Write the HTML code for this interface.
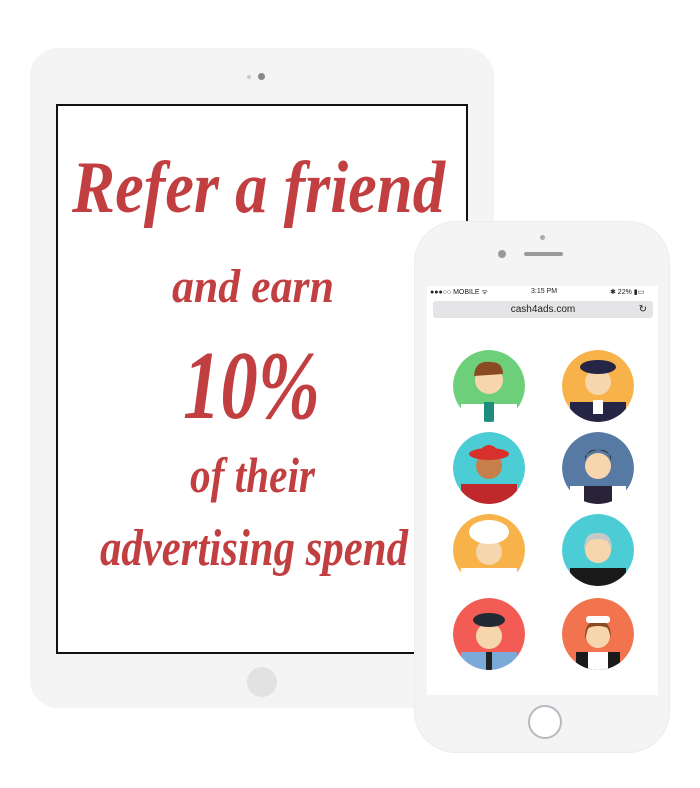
<!DOCTYPE html>
<html><head><style>
html,body{margin:0;padding:0;background:#fff;width:700px;height:788px;overflow:hidden;font-family:"Liberation Sans",sans-serif}
.abs{position:absolute}
</style></head><body>
<div class="abs" style="left:30px;top:48px;width:464px;height:660px;background:#f4f4f4;border-radius:28px"></div>
<div class="abs" style="left:247px;top:75px;width:4px;height:4px;border-radius:50%;background:#ccc"></div>
<div class="abs" style="left:258px;top:73px;width:7px;height:7px;border-radius:50%;background:#888"></div>
<div class="abs" style="left:56px;top:104px;width:408px;height:546px;background:#fff;border:2px solid #111"></div>
<div class="abs" style="left:247px;top:667px;width:30px;height:30px;border-radius:50%;background:#e2e2e2"></div>
<svg class="abs" style="left:0;top:0" width="700" height="788">
<g fill="#c23f41" font-family="Liberation Serif,serif" font-style="italic" font-weight="bold" text-anchor="start">
<text x="72" y="212" font-size="74" textLength="373" lengthAdjust="spacingAndGlyphs">Refer a friend</text>
<text x="172" y="302" font-size="48" textLength="162" lengthAdjust="spacingAndGlyphs">and earn</text>
<text x="183" y="418" font-size="98" textLength="137" lengthAdjust="spacingAndGlyphs">10%</text>
<text x="190" y="492" font-size="50" textLength="125" lengthAdjust="spacingAndGlyphs">of their</text>
<text x="100" y="565" font-size="52" textLength="308" lengthAdjust="spacingAndGlyphs">advertising spend</text>
</g>
</svg>
<div class="abs" style="left:414px;top:221px;width:256px;height:532px;background:#f4f4f4;border-radius:42px;border:1px solid #ececec;box-sizing:border-box"></div>
<div class="abs" style="left:540px;top:235px;width:5px;height:5px;border-radius:50%;background:#aaa"></div>
<div class="abs" style="left:498px;top:250px;width:8px;height:8px;border-radius:50%;background:#999"></div>
<div class="abs" style="left:524px;top:252px;width:39px;height:4px;border-radius:2px;background:#9a9a9a"></div>
<div class="abs" style="left:427px;top:286px;width:231px;height:409px;background:#fff"></div>
<div class="abs" style="left:430px;top:288px;font-size:7px;color:#222;width:225px">
<span style="position:absolute;left:0">●●●○○ MOBILE ᯤ</span>
<span style="position:absolute;left:101px">3:15 PM</span>
<span style="position:absolute;left:180px">✱ 22% ▮▭</span></div>
<div class="abs" style="left:433px;top:301px;width:220px;height:17px;background:#e4e4e6;border-radius:3px;font-size:10px;color:#222;text-align:center;line-height:17px">cash4ads.com<span style="position:absolute;right:6px;font-size:10px">↻</span></div>
<div class="abs" style="left:528px;top:705px;width:34px;height:34px;border-radius:50%;border:2px solid #b8b8c0;box-sizing:border-box;background:#fff"></div>
<svg class="abs" style="left:0;top:0" width="700" height="788">
<defs>
<clipPath id="c1"><circle cx="0" cy="0" r="36"/></clipPath>
</defs>
<g>
<g transform="translate(489,386)" clip-path="url(#c1)"><circle r="36" fill="#6dcf79"/><rect x="-28" y="18" width="56" height="25" fill="#fff"/><rect x="-5" y="16" width="10" height="25" fill="#1e8c7a"/><circle cy="-6" r="14" fill="#f7d6ae"/><path d="M-15,-10 Q-14,-26 2,-24 Q14,-24 14,-12 L-15,-10Z" fill="#8a4a22"/></g>
<g transform="translate(598,386)" clip-path="url(#c1)"><circle r="36" fill="#f7b24a"/><rect x="-28" y="16" width="56" height="25" fill="#252545"/><rect x="-5" y="14" width="10" height="14" fill="#fff"/><circle cy="-4" r="13" fill="#f7d6ae"/><ellipse cy="-19" rx="18" ry="7" fill="#252545"/></g>
<g transform="translate(489,468)" clip-path="url(#c1)"><circle r="36" fill="#4ccdd6"/><rect x="-28" y="16" width="56" height="25" fill="#c0282b"/><circle cy="-2" r="13" fill="#c77e4a"/><ellipse cy="-14" rx="20" ry="6" fill="#d8302d"/><path d="M-12,-14 Q0,-32 12,-14Z" fill="#d8302d"/></g>
<g transform="translate(598,468)" clip-path="url(#c1)"><circle r="36" fill="#567aa3"/><rect x="-28" y="18" width="56" height="25" fill="#fff"/><rect x="-14" y="18" width="28" height="25" fill="#2a2238"/><circle cy="-2" r="13" fill="#f7d6ae"/><path d="M-13,-6 Q-12,-20 0,-18 Q12,-20 13,-6 L13,-12 Q0,-24 -13,-12Z" fill="#3a2c28"/></g>
<g transform="translate(489,550)" clip-path="url(#c1)"><circle r="36" fill="#f7b24a"/><rect x="-28" y="18" width="56" height="25" fill="#fff"/><circle cy="2" r="13" fill="#f7d6ae"/><ellipse cy="-18" rx="20" ry="12" fill="#fff"/></g>
<g transform="translate(598,550)" clip-path="url(#c1)"><circle r="36" fill="#4ccdd6"/><rect x="-28" y="18" width="56" height="25" fill="#1a1a1a"/><circle cy="0" r="13" fill="#f7d6ae"/><path d="M-14,0 Q-14,-18 0,-17 Q14,-18 14,0 L11,-8 Q0,-14 -11,-8Z" fill="#c8c8c8"/></g>
<g transform="translate(489,634)" clip-path="url(#c1)"><circle r="36" fill="#f25c54"/><rect x="-28" y="18" width="56" height="25" fill="#7aaad8"/><rect x="-3" y="18" width="6" height="20" fill="#222"/><circle cy="2" r="13" fill="#f7d6ae"/><ellipse cy="-14" rx="16" ry="7" fill="#222a36"/></g>
<g transform="translate(598,634)" clip-path="url(#c1)"><circle r="36" fill="#f2744e"/><rect x="-22" y="18" width="44" height="25" fill="#1a1a1a"/><rect x="-10" y="18" width="20" height="25" fill="#fff"/><circle cy="2" r="12" fill="#f7d6ae"/><path d="M-13,6 Q-14,-14 0,-13 Q13,-14 13,4 L10,-6 Q0,-10 -10,-6Z" fill="#8a4a22"/><rect x="-12" y="-18" width="24" height="7" rx="3" fill="#fff"/></g>
</g>
</svg>
</body></html>
